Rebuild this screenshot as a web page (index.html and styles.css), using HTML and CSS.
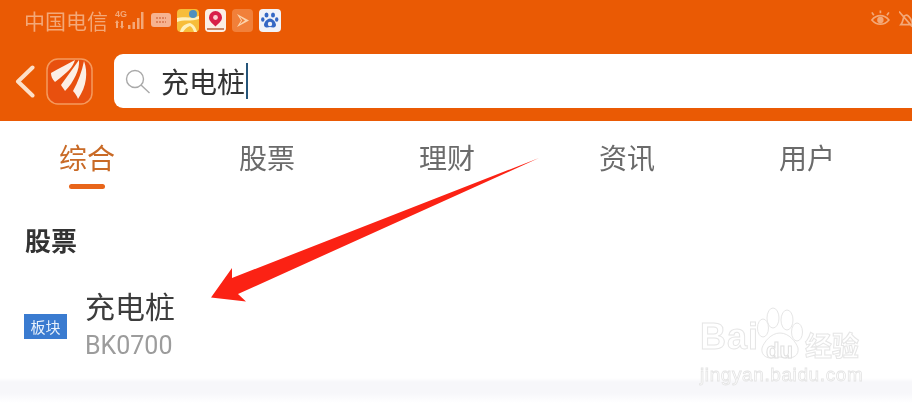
FILE: index.html
```html
<!DOCTYPE html>
<html lang="zh">
<head>
<meta charset="utf-8">
<title>搜索</title>
<link rel="stylesheet" href="styles.css">
</head>
<body>
<div class="page">
  <header class="header">
    <div class="status">
      <span class="carrier">中国电信</span>
      <svg class="signal" width="30" height="24" viewBox="0 0 30 24"><g fill="#f3a878"><rect x="14" y="17" width="2.500" height="4"/><rect x="18.500" y="14" width="2.500" height="7"/><rect x="23" y="10" width="2.500" height="11"/><rect x="27" y="4" width="2.500" height="17"/><path d="M3 12l2 3H4v5H2v-5H1zM8 21l-2-3h1v-5h2v5h1z"/></g><text x="1" y="9" class="sig-text">4G</text></svg>
      <svg class="msg" width="20" height="14" viewBox="0 0 20 14"><rect width="20" height="14" rx="3" fill="#f6b390"/><path d="M5 5h10M5 9h10" stroke="#d9744a" stroke-width="1.400" stroke-dasharray="2 1"/></svg>
      <svg class="app" width="22" height="23" viewBox="0 0 22 23"><rect width="22" height="23" rx="4" fill="#f7bd3a"/><path d="M0 9c6-2 12 1 22-2v3C14 13 6 10 0 13z" fill="#fff0bc"/><path d="M3 23c1-5 4-8 10-9 3 1 6 4 7 9h-3c-1-3-2-5-4-6-3 1-5 3-7 6z" fill="#fff0bc"/><circle cx="16" cy="5" r="4" fill="#4f8fc0"/></svg>
      <svg class="app" width="21" height="23" viewBox="0 0 21 23"><rect width="21" height="23" rx="4" fill="#fbeee6"/><path d="M10.500 2a6.500 6.500 0 0 1 6.500 6.500c0 4-4 6-6.500 9-2.500-3-6.500-5-6.500-9A6.500 6.500 0 0 1 10.500 2z" fill="#d8204a"/><circle cx="10.500" cy="8.500" r="2.400" fill="#fbd0d0"/><path d="M2 20h17" stroke="#b9603a" stroke-width="1.500"/></svg>
      <svg class="app" width="21" height="23" viewBox="0 0 21 23"><rect width="21" height="23" rx="4" fill="#f1803a"/><path d="M5 5l12 6.500L5 18l4-6.500z" fill="#fbd3ac"/><path d="M8 8l5 3.500-5 3.500 2-3.500z" fill="#f1803a"/></svg>
      <svg class="app" width="22" height="23" viewBox="0 0 22 23"><rect width="22" height="23" rx="4" fill="#f1f3f8"/><g fill="#3568c4"><ellipse cx="7.500" cy="6" rx="2" ry="2.600"/><ellipse cx="14" cy="6" rx="2" ry="2.600"/><ellipse cx="3.800" cy="10.500" rx="1.700" ry="2.200"/><ellipse cx="17.700" cy="10.500" rx="1.700" ry="2.200"/><path d="M11 9.500c3 0 6 4 6 6.500 0 2-2 2.500-3 2.500s-2-.5-3-.5-2 .5-3 .5-3-.5-3-2.500c0-2.500 3-6.500 6-6.500z"/></g><circle cx="11" cy="15" r="2.200" fill="#f1f3f8"/></svg>
      <div class="status-right">
        <svg width="22" height="18" viewBox="0 0 22 18" fill="none" stroke="#f3a878" stroke-width="1.800"><path d="M2 10c5-6 13-6 18 0-5 6-13 6-18 0z"/><circle cx="11" cy="10" r="2.500" fill="#f3a878"/><path d="M4 5L2 2M11 3V0M18 5l2-3"/></svg>
        <svg width="14" height="20" viewBox="0 0 14 20" fill="none" stroke="#f3a878" stroke-width="1.800"><path d="M2 15c2-2 2-5 3-8 1-2 3-3 5-1s4 6 4 9zM0 1l14 16"/></svg>
      </div>
    </div>
    <div class="search-row">
      <svg class="back" width="20" height="33" viewBox="0 0 20 33" fill="none"><path d="M17.500 2.500L3 16.500l14.500 14" stroke="#fde0c8" stroke-width="4" stroke-linecap="round" stroke-linejoin="round"/></svg>
      <svg class="logo" width="47" height="47" viewBox="0 0 47 47"><rect x="1" y="1" width="45" height="45" rx="11" fill="#e8500f" stroke="#f59a5e" stroke-width="1.500"/><path d="M5 15C13 10 22 6 29 2 27 9 22 14 9 24 6 21 5 18 5 15z" fill="#fcefe6"/><path d="M15 27C21 19 27 10 33 2 34 11 28 24 19 33 18 31 16 29 15 27z" fill="#fcefe6"/><path d="M27 33C32 24 36 13 38 3 42 14 41 28 32 41 31 38 29 35 27 33z" fill="#fcefe6"/></svg>
      <div class="search-box">
        <svg class="lens" width="27" height="27" viewBox="0 0 27 27" fill="none" stroke="#a9a9a9" stroke-width="1.400"><circle cx="11" cy="11" r="8.500"/><path d="M17 17l8.500 8"/></svg>
        <span class="query">充电桩</span><span class="caret"></span>
      </div>
    </div>
  </header>
  <nav class="tabs">
    <div class="tab active">综合</div>
    <div class="tab">股票</div>
    <div class="tab">理财</div>
    <div class="tab">资讯</div>
    <div class="tab">用户</div>
  </nav>
  <main class="results">
    <h2 class="section-title">股票</h2>
    <div class="result">
      <span class="badge">板块</span>
      <div class="result-text">
        <div class="name">充电桩</div>
        <div class="code">BK0700</div>
      </div>
    </div>
  </main>
  <div class="band"></div>

  <svg class="arrow" width="912" height="405" viewBox="0 0 912 405"><path d="M539 158L238 294l8 7.500-35-4 21-29.500 0 10z" fill="#fb2214"/></svg>

  <div class="watermark">
    <div class="wm-top">
      <span class="wm-word">Bai</span>
      <svg class="wm-paw" width="48" height="55" viewBox="0 0 48 55" fill="#fff" stroke="#e6e6e6" stroke-width="1"><ellipse cx="16" cy="11" rx="6" ry="10"/><ellipse cx="30" cy="13" rx="6" ry="10"/><ellipse cx="6" cy="21" rx="5.500" ry="9"/><ellipse cx="40" cy="25" rx="5.500" ry="9"/><path d="M23 26c9 0 16 9 18 15 1 7-4 10-10 10-3 0-5-1-8-1s-5 1-9 1c-6 0-10-4-9-10 2-6 9-15 18-15z"/></svg>
      <span class="wm-du">du</span>
      <span class="wm-cn">经验</span>
    </div>
    <div class="wm-url">jingyan.baidu.com</div>
  </div>
</div>
</body>
</html>
```

FILE: styles.css
```css
* {
  box-sizing: border-box;
}

html,
body {
  margin: 0;
  padding: 0;
  background: #fff;
}

.page {
  position: relative;
  width: 912px;
  height: 405px;
  overflow: hidden;
  display: flex;
  flex-direction: column;
  font-family: "Noto Sans CJK SC", "Liberation Sans", sans-serif;
  background: #fff;
  filter: blur(.35px);
}

.header {
  height: 121px;
  background: #ea5a04;
  display: flex;
  flex-direction: column;
  flex: none;
}

.status {
  height: 54px;
  padding: 8px 0 0 24px;
  display: flex;
  align-items: flex-start;
  flex: none;
}

.carrier {
  font-size: 21px;
  line-height: 24px;
  color: #f3a878;
  white-space: nowrap;
}

.signal {
  margin: 0 0 0 6px;
}

.sig-text {
  font: 700 9px "Liberation Sans", sans-serif;
  fill: #f3a878;
}

.msg {
  margin: 5px 0 0 7px;
}

.app {
  margin: 1px 0 0 6px;
}

.status-right {
  margin-left: auto;
  display: flex;
  gap: 8px;
  padding-top: 2px;
  width: 42px;
  overflow: hidden;
}

.search-row {
  display: flex;
  align-items: flex-start;
  height: 54px;
  flex: none;
}

.back {
  margin: 11px 0 0 15px;
}

.logo {
  margin: 4px 0 0 11px;
}

.search-box {
  flex: 1;
  height: 54px;
  margin-left: 21px;
  background: #fff;
  border-radius: 9px 0 0 9px;
  display: flex;
  align-items: center;
  padding-left: 10px;
}

.lens {
  flex: none;
  margin-right: 10px;
}

.query {
  font-size: 28px;
  line-height: 36px;
  color: #333;
}

.caret {
  width: 2px;
  height: 36px;
  margin-left: 1px;
  background: #25557a;
}

.tabs {
  height: 71px;
  margin-left: -3px;
  display: grid;
  grid-template-columns: repeat(5, 180px);
  flex: none;
}

.tab {
  position: relative;
  text-align: center;
  font-size: 28px;
  line-height: 36px;
  padding-top: 18px;
  color: #6b6b6b;
}

.tab.active {
  color: #c96a26;
}

.tab.active::after {
  content: "";
  position: absolute;
  left: 72px;
  top: 63px;
  width: 36px;
  height: 5px;
  border-radius: 3px;
  background: #e8651a;
}

.results {
  flex: 1;
  padding: 31px 0 0 24px;
}

.section-title {
  margin: 0 0 0 1px;
  font-size: 26px;
  line-height: 34px;
  font-weight: 700;
  color: #333;
}

.result {
  display: flex;
  align-items: flex-start;
  margin-top: 28px;
}

.badge {
  width: 43px;
  height: 25px;
  margin-top: 29px;
  flex: none;
  background: #3a7bd0;
  color: #e8f1fb;
  font-size: 15px;
  line-height: 25px;
  text-align: center;
}

.result-text {
  margin-left: 18px;
}

.name {
  font-size: 30px;
  line-height: 40px;
  color: #3d3d3d;
}

.code {
  font-family: "Roboto", "Liberation Sans", sans-serif;
  font-size: 25px;
  line-height: 30px;
  color: #9c9c9c;
  margin-top: 6px;
}

.band {
  height: 27px;
  flex: none;
  background: linear-gradient(#fff 0, #f7f7fa 4px, #f7f7fa 15px, #fff 25px);
}

.arrow {
  position: absolute;
  left: 0;
  top: 0;
}

.watermark {
  position: absolute;
  left: 700px;
  top: 307px;
  width: 170px;
}

.wm-top {
  position: relative;
  height: 55px;
  display: flex;
  align-items: flex-end;
}

.wm-word {
  font-family: "Liberation Sans", sans-serif;
  font-weight: 700;
  font-size: 36px;
  line-height: 42px;
  color: #fff;
  -webkit-text-stroke: 1px #e6e6e6;
  height: 46px;
  letter-spacing: 1px;
}

.wm-paw {
  position: absolute;
  left: 57px;
  top: 0;
}

.wm-du {
  position: absolute;
  left: 66px;
  top: 33px;
  font: 700 22px/22px "Liberation Sans", sans-serif;
  color: #fff;
  -webkit-text-stroke: 1px #e0e0e0;
}

.wm-cn {
  position: absolute;
  left: 105px;
  top: 20px;
  font-size: 27px;
  line-height: 36px;
  font-weight: 700;
  color: #fff;
  -webkit-text-stroke: 1px #e6e6e6;
  white-space: nowrap;
}

.wm-url {
  margin-top: 2px;
  font-family: "Liberation Sans", sans-serif;
  font-size: 19px;
  line-height: 22px;
  letter-spacing: .6px;
  color: #fff;
  -webkit-text-stroke: .8px #e4e4e4;
  white-space: nowrap;
}
```
